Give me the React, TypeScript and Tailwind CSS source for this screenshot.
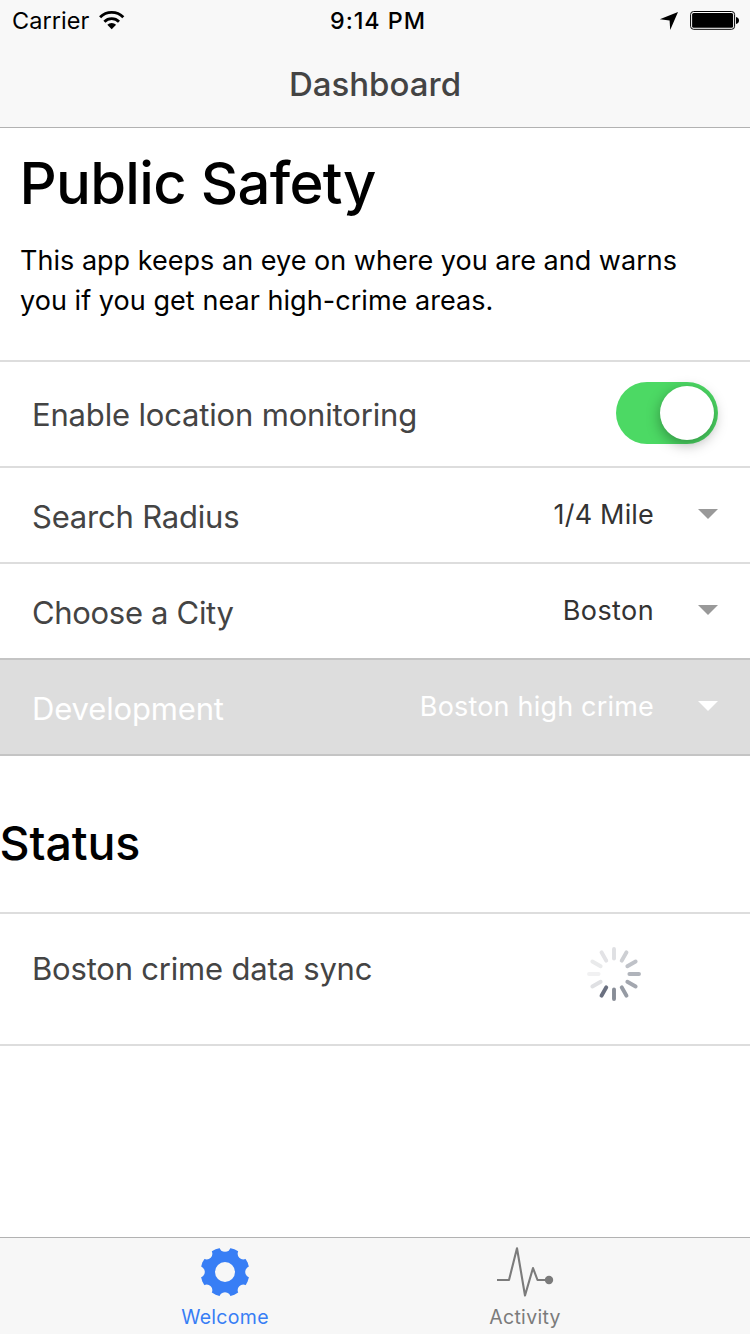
import type { ReactNode } from "react";

const spokes = [
  "#dfe0e3", "#cdcfd3", "#bfc2c8", "#b0b4bb", "#a3a7af", "#969ba4",
  "#888d97", "#6a7080", "#dfe0e3", "#f1f1f2", "#e9eaeb", "#e3e3e6",
];

function WifiIcon() {
  return (
    <svg width="26" height="20" viewBox="0 0 26 20" fill="none" stroke="#000" className="mb-[3px]">
      <path d="M1.1 7.2A16.3 16.3 0 0 1 24.3 7.2" strokeWidth="2.9" />
      <path d="M5.4 11.7A10.2 10.2 0 0 1 20 11.7" strokeWidth="2.8" />
      <path d="M12.7 19.2L8.3 14.8A6.2 6.2 0 0 1 17.1 14.8Z" fill="#000" stroke="none" />
    </svg>
  );
}

function LocationIcon() {
  return (
    <svg width="20" height="20" viewBox="0 0 20 20" className="mb-[3px]">
      <path d="M0.8 9.3L19 1.9L11.2 20L10.6 10.4Z" />
    </svg>
  );
}

function BatteryIcon() {
  return (
    <svg width="50" height="20" viewBox="0 0 50 20" className="mb-[3px]">
      <rect x="0.6" y="1.5" width="44" height="17.8" rx="3" fill="#fff" stroke="#000" strokeWidth="1" />
      <rect x="2.1" y="3" width="41" height="14.8" rx="1.6" />
      <path d="M46 7Q49 7.6 49 10.4Q49 13.2 46 13.9Z" />
    </svg>
  );
}

function Caret({ color }: { color: string }) {
  return (
    <svg width="20" height="10" viewBox="0 0 20 10" className="mb-[2px] ml-[44px] shrink-0">
      <path d="M0 0H20L10 10Z" fill={color} />
    </svg>
  );
}

function GearIcon() {
  return (
    <svg width="50" height="50" viewBox="0 0 50 50">
      <mask id="gear-teeth">
        <rect width="50" height="50" fill="#fff" />
        <circle cx="25" cy="25" r="10" fill="#000" />
        {[0, 1, 2, 3, 4, 5, 6, 7].map((i) => (
          <circle key={i} cx="25" cy="-0.9" r="5.7" fill="#000" transform={`rotate(${i * 45} 25 25)`} />
        ))}
      </mask>
      <circle cx="25" cy="25" r="24.5" fill="#387ef5" mask="url(#gear-teeth)" />
    </svg>
  );
}

function PulseIcon() {
  return (
    <svg width="58" height="50" viewBox="0 0 58 50">
      <path d="M1 33H13L21 1.2L29 48.5L37 21L41.5 33H53" fill="none" stroke="#7b7b7b" strokeWidth="2.1" strokeLinejoin="round" />
      <circle cx="53" cy="33" r="4.2" fill="#7b7b7b" />
    </svg>
  );
}

function Spinner() {
  return (
    <svg width="56" height="56" viewBox="0 0 56 56">
      {spokes.map((color, i) => (
        <line key={i} x1="28" y1="3" x2="28" y2="12.6" stroke={color} strokeWidth="3.9" strokeLinecap="round" transform={`rotate(${i * 30} 28 28)`} />
      ))}
    </svg>
  );
}

function SelectRow({ label, value, caret = "#999999", className }: { label: ReactNode; value: ReactNode; caret?: string; className: string }) {
  return (
    <div className={`flex h-24 items-center border-b-2 pr-8 pl-8 ${className}`}>
      <div className="flex-1 pt-[3px] text-[31px] leading-[40px]">{label}</div>
      <div className="pb-px text-[27px] leading-[40px]">{value}</div>
      <Caret color={caret} />
    </div>
  );
}

export default function App() {
  return (
    <div className="flex h-[1334px] w-[750px] flex-col overflow-hidden bg-white font-['Inter',sans-serif] text-black">
      <header className="h-32 shrink-0 border-b border-[#b2b2b2] bg-[#f8f8f8]">
        <div className="grid h-10 grid-cols-[1fr_auto_1fr] items-center pt-px">
          <div className="flex items-center pl-3">
            <span className="text-[23.5px] leading-10 tracking-[0.05px]">Carrier</span>
            <span className="ml-[10px]"><WifiIcon /></span>
          </div>
          <span className="ml-[6px] text-[23.3px] leading-10 font-medium tracking-[0.95px]">9:14 PM</span>
          <div className="flex items-center justify-end gap-[11px] pr-[10px]">
            <LocationIcon />
            <BatteryIcon />
          </div>
        </div>
        <h1 className="text-center text-[33px] leading-[88px] font-[450] text-[#444444]">Dashboard</h1>
      </header>

      <main className="flex-1">
        <section className="h-[232px] pt-5 pl-[20px]">
          <h2 className="-ml-[0.5px] text-[58px] leading-[70px] font-medium tracking-[-0.7px]">Public Safety</h2>
          <p className="mt-[23px] text-[27px] leading-[40px] tracking-[0.02px]">
            This app keeps an eye on where you are and warns
            <br />
            <span className="tracking-[0.05px]">you if you get near high-crime areas.</span>
          </p>
        </section>

        <section className="border-t-2 border-[#dddddd] text-[#444444]">
          <div className="flex h-[106px] items-center justify-between border-b-2 border-[#dddddd] px-8">
            <div className="pt-px text-[31px] leading-[40px] tracking-[-0.17px]">Enable location monitoring</div>
            <div className="-mt-[2px] flex h-[62px] w-[102px] items-center justify-end rounded-full bg-[#4cd964] pr-1">
              <div className="size-[54px] rounded-full bg-white shadow-[0_4px_14px_rgba(0,0,0,0.35)]" />
            </div>
          </div>
          <SelectRow
            className="border-[#dddddd]"
            label={<span className="tracking-[-0.2px]">Search Radius</span>}
            value={<span className="tracking-[0.18px] text-[#333333]">1/4 Mile</span>}
          />
          <SelectRow
            className="border-[#c4c4c4]"
            label={<span className="tracking-[-0.32px]">Choose a City</span>}
            value={<span className="tracking-[0.4px] text-[#333333]">Boston</span>}
          />
          <SelectRow
            className="border-[#c4c4c4] bg-[#dddddd] text-white"
            caret="#ffffff"
            label={<span className="tracking-[-0.15px]">Development</span>}
            value={<span className="tracking-[0.19px]">Boston high crime</span>}
          />
        </section>

        <h3 className="-ml-[0.5px] pt-[57px] pb-[39px] text-[46.5px] leading-[60px] font-medium tracking-[-0.1px]">Status</h3>

        <section className="flex h-[134px] items-start justify-between border-y-2 border-[#dddddd] pr-[108px] pl-8 text-[#444444]">
          <span className="pt-[35px] text-[31px] leading-[40px] tracking-[-0.2px]">Boston crime data sync</span>
          <span className="pt-8"><Spinner /></span>
        </section>
      </main>

      <nav className="flex h-[97px] shrink-0 justify-center border-t border-[#b2b2b2] bg-[#f7f7f7] text-[19.5px] leading-6 text-[#7b7b7b]">
        <div className="flex w-[300px] flex-col items-center pt-[9px] text-[#387ef5]">
          <GearIcon />
          <span className="mt-[8px] tracking-[0.3px]">Welcome</span>
        </div>
        <div className="flex w-[300px] flex-col items-center pt-[9px]">
          <PulseIcon />
          <span className="mt-[8px] tracking-[0.3px]">Activity</span>
        </div>
      </nav>
    </div>
  );
}
